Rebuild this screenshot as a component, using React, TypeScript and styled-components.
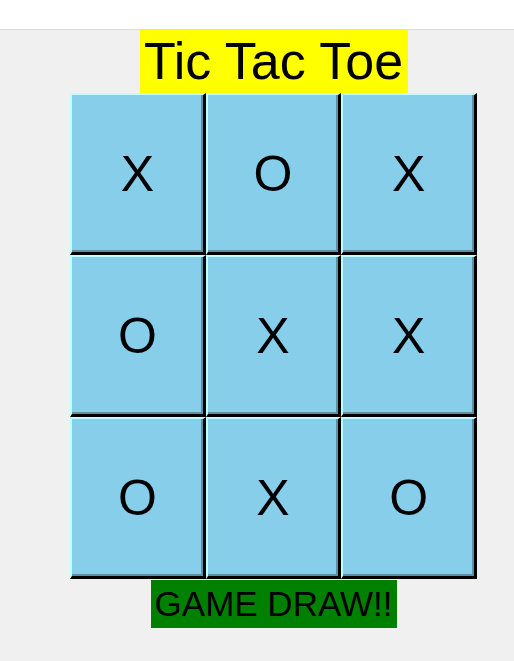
import React from "react";
import styled, { createGlobalStyle } from "styled-components";

const Global = createGlobalStyle`
  html, body { margin: 0; padding: 0; background: #f0f0f0; }
  body { font-family: "Liberation Sans", Arial, sans-serif; }
`;

const Page = styled.div`
  width: 514px;
  height: 661px;
  background: #f0f0f0;
  display: flex;
  flex-direction: column;
`;

const TopBar = styled.div`
  height: 29px;
  background: #ffffff;
  border-bottom: 1px solid #dadada;
  flex: none;
`;

const Content = styled.div`
  display: flex;
  flex-direction: column;
  align-items: center;
  padding-left: 33px;
`;

const Title = styled.div`
  width: 268px;
  height: 63px;
  background: #ffff00;
  color: #000;
  font-size: 52px;
  line-height: 63px;
  text-align: center;
  white-space: nowrap;
`;

const Board = styled.div`
  width: 407px;
  height: 486px;
  display: grid;
  grid-template-columns: repeat(3, 1fr);
  grid-template-rows: repeat(3, 1fr);
`;

const Cell = styled.div`
  box-sizing: border-box;
  background: #87ceeb;
  border-top: 2px solid #c0ffff;
  border-left: 2px solid #c0ffff;
  border-right: 3px solid #000;
  border-bottom: 3px solid #000;
  box-shadow: inset -2px -2px 0 #5e90a4;
  display: flex;
  align-items: center;
  justify-content: center;
  font-size: 50px;
  color: #000;
`;

const Status = styled.div`
  width: 246px;
  height: 48px;
  margin-top: 1px;
  background: #008000;
  color: #000;
  font-size: 35px;
  line-height: 48px;
  text-align: center;
  white-space: nowrap;
`;

const cells = ["X", "O", "X", "O", "X", "X", "O", "X", "O"];

export default function App() {
  return (
    <Page>
      <Global />
      <TopBar />
      <Content>
        <Title>Tic Tac Toe</Title>
        <Board>
          {cells.map((c, i) => (
            <Cell key={i}>{c}</Cell>
          ))}
        </Board>
        <Status>GAME DRAW!!</Status>
      </Content>
    </Page>
  );
}
